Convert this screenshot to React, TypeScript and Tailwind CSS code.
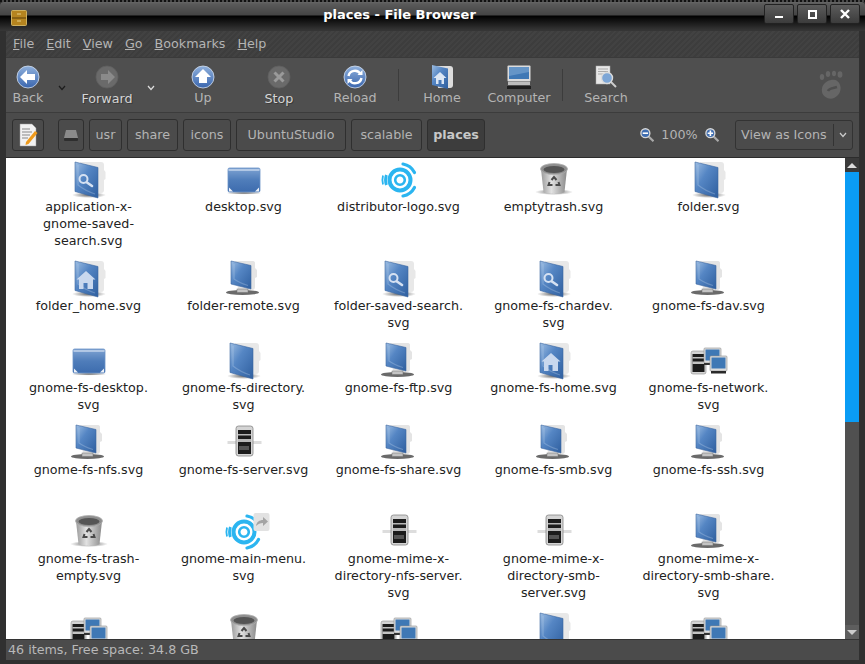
import type { ReactNode } from "react";

function Defs() {
  return (
    <svg width="0" height="0" className="absolute">
      <defs>
        <linearGradient id="blueFolder" x1="0" y1="0" x2="1" y2="1">
          <stop offset="0" stopColor="#9dbde2" />
          <stop offset="0.4" stopColor="#5586c4" />
          <stop offset="1" stopColor="#2f5f9f" />
        </linearGradient>
        <linearGradient id="blueFlat" x1="0" y1="0" x2="0" y2="1">
          <stop offset="0" stopColor="#7fa3d2" />
          <stop offset="0.5" stopColor="#4f7dba" />
          <stop offset="1" stopColor="#3d6cae" />
        </linearGradient>
        <linearGradient id="blueBall" x1="0" y1="0" x2="0" y2="1">
          <stop offset="0" stopColor="#8fb0dc" />
          <stop offset="1" stopColor="#3a66ae" />
        </linearGradient>
        <linearGradient id="can" x1="0" y1="0" x2="1" y2="0">
          <stop offset="0" stopColor="#9a9a9a" />
          <stop offset="0.4" stopColor="#e2e2e2" />
          <stop offset="1" stopColor="#8a8a8a" />
        </linearGradient>
        <radialGradient id="shadow">
          <stop offset="0" stopColor="#444" stopOpacity="0.85" />
          <stop offset="1" stopColor="#444" stopOpacity="0" />
        </radialGradient>
      </defs>
    </svg>
  );
}

type FolderKind = "plain" | "search" | "home" | "remote";

function FolderIcon({ kind = "plain" }: { kind?: FolderKind }) {
  if (kind === "remote") {
    return (
      <svg width="40" height="40" viewBox="0 0 40 40">
        <path d="M11 3h18c1.500 0 2 1 2 2v5l2 2v7l-2 1v9c0 2-1 3-3 3H14z" fill="#e4e4e4" />
        <ellipse cx="18.500" cy="34.500" rx="16.500" ry="2.400" fill="#6a6a6a" />
        <rect x="13" y="31" width="11" height="3.500" fill="#c4c4c4" stroke="#707070" strokeWidth="0.500" />
        <path d="M7 3l20 4.500V31L7 26z" fill="url(#blueFolder)" stroke="#3b659f" strokeWidth="0.600" />
        <path d="M10 6v15c4 3 9 5 14 6.500" fill="none" stroke="#c4d6ee" strokeOpacity="0.3" strokeWidth="1.200" />
      </svg>
    );
  }
  return (
    <svg width="40" height="40" viewBox="0 0 40 40">
      <ellipse cx="20" cy="36" rx="17" ry="3" fill="url(#shadow)" />
      <path d="M11 3h21c2 0 3 1 3 3v5l1.500 2v7l-1.500 1v10c0 2-1 3-3 3H14z" fill="#e8e8e8" />
      <path d="M6 3l23 5.500V39L6 32.500z" fill="url(#blueFolder)" stroke="#39659f" strokeWidth="0.600" />
      <path d="M9 6v20c5 4 11 7 17 9" fill="none" stroke="#c4d6ee" strokeOpacity="0.3" strokeWidth="1.200" />
      {kind === "search" && (
        <g stroke="#d5e1f2" fill="none">
          <circle cx="14.500" cy="20" r="4" strokeWidth="2" />
          <path d="M18 23.500l5 3.500" strokeWidth="2.600" strokeLinecap="round" />
        </g>
      )}
      {kind === "home" && (
        <path d="M17 13l-9.500 8.500h2.500V31h4.500v-6h4v6h5.500v-9.500h2.500z" fill="#c9d8ee" />
      )}
    </svg>
  );
}

function DesktopIcon() {
  return (
    <svg width="40" height="40" viewBox="0 0 40 40">
      <ellipse cx="20" cy="34" rx="18" ry="1.600" fill="url(#shadow)" />
      <rect x="4" y="9" width="32" height="24" rx="1.500" fill="url(#blueFlat)" stroke="#6b92c6" strokeWidth="0.800" />
      <path d="M4.500 11h31" stroke="#d9e4f3" strokeWidth="1.200" />
      <path d="M5 32.500v-4l4 4zM35 32.500v-4l-4 4z" fill="#eef2f8" />
    </svg>
  );
}

function LogoRings({ cx }: { cx: number }) {
  return (
    <g fill="none" stroke="#2bb5f0" transform={`translate(${cx} 21)`}>
      <circle r="4.800" strokeWidth="2.600" />
      <circle r="10.500" strokeWidth="4" />
      <path d="M-13.600 -5a14.500 14.500 0 0 0 0 10" strokeWidth="2.800" />
      <path d="M-17 -4.500a17.500 17.500 0 0 0 0 9" strokeWidth="1.800" />
      <path d="M3 -16a16.300 16.300 0 0 1 11.500 8.500" strokeWidth="3.200" strokeLinecap="round" />
      <path d="M3 16a16.300 16.300 0 0 0 11.500 -8.500" strokeWidth="3.200" strokeLinecap="round" />
    </g>
  );
}

function LogoIcon({ link }: { link?: boolean }) {
  return (
    <svg width="40" height="40" viewBox="0 0 40 40" className="overflow-visible">
      <LogoRings cx={link ? 20 : 21} />
      {link && (
        <g>
          <rect x="29.500" y="2" width="16" height="18" rx="2" fill="#e2e2e2" />
          <path d="M32 15c.5-4 3.500-6 7-6V6l5 4.500-5 4.500v-3c-3 0-5 1-7 3z" fill="#a4a4a4" />
        </g>
      )}
    </svg>
  );
}

function TrashIcon() {
  return (
    <svg width="40" height="40" viewBox="0 0 40 40">
      <ellipse cx="20" cy="33" rx="19" ry="3" fill="url(#shadow)" />
      <path d="M7 10l2.500 23c3 2.500 18 2.500 21 0L33 10z" fill="url(#can)" />
      <ellipse cx="20" cy="10" rx="13.500" ry="5.500" fill="#8e8e8e" stroke="#b0b0b0" strokeWidth="0.800" />
      <ellipse cx="20" cy="10.500" rx="10.500" ry="3.500" fill="#555" />
      <g fill="none" stroke="#4a4a4a" strokeWidth="2">
        <path d="M17.500 21l2.500-3 2.500 3" />
        <path d="M24.500 23l1 3h-4" />
        <path d="M15.500 23l-1 3h4" />
      </g>
    </svg>
  );
}

function ServerIcon() {
  return (
    <svg width="40" height="40" viewBox="0 0 40 40">
      <rect x="3.500" y="19" width="34" height="3" fill="#d4d4d4" opacity="0.800" />
      <rect x="12" y="4" width="17" height="30" rx="2.500" fill="#d4d4d4" stroke="#858585" strokeWidth="0.800" />
      <rect x="14" y="8" width="13" height="24" fill="#1c1c1c" />
      <rect x="14" y="12" width="13" height="1.500" fill="#b8b8b8" />
      <rect x="14" y="17" width="13" height="3" fill="#b8b8b8" />
      <path d="M16 24v4M18 24v4M20 24v4M22 24v4M24 24v4" stroke="#8c8c8c" strokeWidth="1" />
    </svg>
  );
}

function MiniMonitor({ x, y, w, h }: { x: number; y: number; w: number; h: number }) {
  return (
    <g>
      <rect x={x} y={y} width={w} height={h} rx="1" fill="#dcdcdc" stroke="#8d8d8d" strokeWidth="0.600" />
      <rect x={x + 1.5} y={y + 1.5} width={w - 3} height={h - 4} fill="#3f78b5" />
    </g>
  );
}

function NetworkIcon() {
  return (
    <svg width="40" height="40" viewBox="0 0 40 40">
      <rect x="2" y="11" width="15" height="23" rx="2" fill="#d4d4d4" stroke="#8a8a8a" strokeWidth="0.600" />
      <rect x="3.500" y="14" width="12" height="18" fill="#1c1c1c" />
      <rect x="3.500" y="17" width="12" height="1.500" fill="#c4c4c4" />
      <rect x="3.500" y="21.500" width="12" height="2.500" fill="#c4c4c4" />
      <MiniMonitor x={15} y={8} w={17} h={15} />
      <path d="M15 23h6v2h-6z" fill="#333" />
      <MiniMonitor x={21} y={16} w={17} h={15} />
      <rect x="22" y="31" width="15" height="2.500" fill="#2a2a2a" />
    </svg>
  );
}

type Item = { icon: ReactNode; lines: string[] };

const items: Item[] = [
  { icon: <FolderIcon kind="search" />, lines: ["application-x-", "gnome-saved-", "search.svg"] },
  { icon: <DesktopIcon />, lines: ["desktop.svg"] },
  { icon: <LogoIcon />, lines: ["distributor-logo.svg"] },
  { icon: <TrashIcon />, lines: ["emptytrash.svg"] },
  { icon: <FolderIcon />, lines: ["folder.svg"] },
  { icon: <FolderIcon kind="home" />, lines: ["folder_home.svg"] },
  { icon: <FolderIcon kind="remote" />, lines: ["folder-remote.svg"] },
  { icon: <FolderIcon kind="search" />, lines: ["folder-saved-search.", "svg"] },
  { icon: <FolderIcon kind="search" />, lines: ["gnome-fs-chardev.", "svg"] },
  { icon: <FolderIcon kind="remote" />, lines: ["gnome-fs-dav.svg"] },
  { icon: <DesktopIcon />, lines: ["gnome-fs-desktop.", "svg"] },
  { icon: <FolderIcon />, lines: ["gnome-fs-directory.", "svg"] },
  { icon: <FolderIcon kind="remote" />, lines: ["gnome-fs-ftp.svg"] },
  { icon: <FolderIcon kind="home" />, lines: ["gnome-fs-home.svg"] },
  { icon: <NetworkIcon />, lines: ["gnome-fs-network.", "svg"] },
  { icon: <FolderIcon kind="remote" />, lines: ["gnome-fs-nfs.svg"] },
  { icon: <ServerIcon />, lines: ["gnome-fs-server.svg"] },
  { icon: <FolderIcon kind="remote" />, lines: ["gnome-fs-share.svg"] },
  { icon: <FolderIcon kind="remote" />, lines: ["gnome-fs-smb.svg"] },
  { icon: <FolderIcon kind="remote" />, lines: ["gnome-fs-ssh.svg"] },
  { icon: <TrashIcon />, lines: ["gnome-fs-trash-", "empty.svg"] },
  { icon: <LogoIcon link />, lines: ["gnome-main-menu.", "svg"] },
  { icon: <ServerIcon />, lines: ["gnome-mime-x-", "directory-nfs-server.", "svg"] },
  { icon: <ServerIcon />, lines: ["gnome-mime-x-", "directory-smb-", "server.svg"] },
  { icon: <FolderIcon kind="remote" />, lines: ["gnome-mime-x-", "directory-smb-share.", "svg"] },
  { icon: <NetworkIcon />, lines: [] },
  { icon: <TrashIcon />, lines: [] },
  { icon: <NetworkIcon />, lines: [] },
  { icon: <FolderIcon />, lines: [] },
  { icon: <NetworkIcon />, lines: [] },
];

function NavBall({ glyph, dim }: { glyph: "left" | "right" | "up" | "x" | "reload"; dim?: boolean }) {
  return (
    <svg width="24" height="24" viewBox="0 0 24 24">
      <circle cx="12" cy="12" r="11" fill={dim ? "#6a6a6a" : "url(#blueBall)"} stroke={dim ? "#606060" : "#d4e0f0"} strokeWidth="0.800" />
      {glyph === "left" && <path d="M4 12l7-7v4h8v6h-8v4z" fill="#fff" />}
      {glyph === "right" && <path d="M20 12l-7-7v4H6v6h7v4z" fill="#8a8a8a" />}
      {glyph === "up" && <path d="M12 4l8 8h-4v6H8v-6H4z" fill="#fff" />}
      {glyph === "x" && <path d="M7.500 7.500l9 9M16.500 7.500l-9 9" stroke="#9a9a9a" strokeWidth="3" />}
      {glyph === "reload" && (
        <g fill="none" stroke="#fff" strokeWidth="2.400">
          <path d="M5.500 11a6.500 6.500 0 0 1 12-2" />
          <path d="M18.500 13a6.500 6.500 0 0 1-12 2" />
          <path d="M19.500 5v5h-5z" fill="#fff" stroke="none" />
          <path d="M4.500 19v-5h5z" fill="#fff" stroke="none" />
        </g>
      )}
    </svg>
  );
}

function ToolButton({ icon, label, className, bright }: { icon: ReactNode; label: string; className: string; bright?: boolean }) {
  return (
    <div className={`flex flex-col items-center ${className}`}>
      <div className="flex h-[24px] items-center justify-center">{icon}</div>
      <span
        className={`leading-[17px] ${
          bright ? "mt-[1px] text-[#d4d4d4] [text-shadow:1px_1px_0_#3a3a3a]" : "text-[#b4b4b4]"
        }`}
      >
        {label}
      </span>
    </div>
  );
}

function Chevron({ className, light }: { className: string; light?: boolean }) {
  return (
    <div className={`flex justify-center ${className}`}>
      <svg width="8" height="6" viewBox="0 0 8 6" className="mt-[20px]">
        <path d="M1 1l3 3.500L7 1" fill="none" stroke={light ? "#ddd" : "#1d1d1d"} strokeWidth="1.200" />
      </svg>
    </div>
  );
}

function PathButton({ children, active, className }: { children: ReactNode; active?: boolean; className: string }) {
  return (
    <div
      className={`flex h-[32px] items-center justify-center rounded-[3px] border border-[#2f2f2f] ${
        active ? "bg-[#3d3d3d] font-bold text-[#c8c8c8]" : "bg-[#4b4b4b] text-[#b4b4b4]"
      } ${className}`}
    >
      {children}
    </div>
  );
}

function ZoomGlass({ plus }: { plus?: boolean }) {
  return (
    <svg width="16" height="16" viewBox="0 0 16 16">
      <path d="M9 9l6 6" stroke="#aaa" strokeWidth="2.400" />
      <circle cx="6" cy="6" r="5" fill="#3f6db0" stroke="#d8d8d8" strokeWidth="1.500" />
      <path d={plus ? "M3 6h6M6 3v6" : "M3 6h6"} stroke="#fff" strokeWidth="1.800" />
    </svg>
  );
}

function WinButton({ children }: { children: ReactNode }) {
  return (
    <div className="flex h-[20px] w-[30px] items-center justify-center rounded-[2px] border border-[#222] bg-gradient-to-b from-[#5c5c5c] to-[#3c3c3c]">
      {children}
    </div>
  );
}

const menus = [
  ["F", "ile"],
  ["E", "dit"],
  ["V", "iew"],
  ["G", "o"],
  ["B", "ookmarks"],
  ["H", "elp"],
];

export default function App() {
  return (
    <div className="relative flex h-[664px] w-[865px] flex-col overflow-hidden bg-[#303030] font-['DejaVu_Sans',sans-serif] text-[12.7px]">
      <Defs />
      <div className="h-[2px] shrink-0 bg-[repeating-linear-gradient(90deg,#111_0,#111_2px,#4a4a4a_2px,#4a4a4a_4px)]" />
      {/* title bar */}
      <div className="relative h-[29px] shrink-0 rounded-t-[4px] bg-[linear-gradient(#666_0,#5a5a5a_2px,#444_13px,#000_14px,#0c0c0c_17px,#353535_28px)]">
        <svg width="16" height="16" viewBox="0 0 16 16" className="absolute left-[11px] top-[8px]">
          <rect x="0.500" y="0.500" width="15" height="15" rx="1" fill="#b5841f" stroke="#cdb060" />
          <path d="M1 8h14" stroke="#5c3f08" />
          <path d="M6 4h4M6 11h4" stroke="#e6cf8a" />
        </svg>
        <div className="pt-[4px] pr-[66px] text-center text-[13px] font-bold leading-[18px] text-white">places - File Browser</div>
        <div className="absolute right-[5px] top-[2px] flex gap-[3px]">
          <WinButton><div className="mt-[6px] h-[2px] w-[8px] bg-white" /></WinButton>
          <WinButton><div className="h-[9px] w-[9px] border-2 border-white" /></WinButton>
          <WinButton>
            <svg width="10" height="10" viewBox="0 0 10 10"><path d="M1 1l8 8M9 1l-8 8" stroke="#fff" strokeWidth="2.400" /></svg>
          </WinButton>
        </div>
      </div>

      <div className="mx-[6px] flex min-h-0 flex-1 flex-col bg-[#4b4b4b]">
        {/* menu bar */}
        <div className="flex h-[27px] shrink-0 items-center gap-[12px] border-b border-[#3a3a3a] bg-[repeating-linear-gradient(135deg,#3d3d3d_0,#3d3d3d_2px,#424242_2px,#424242_4px)] pl-[7px] text-[#b4b4b4]">
          {menus.map(([first, rest]) => (
            <span key={first}>
              <span className="underline">{first}</span>
              {rest}
            </span>
          ))}
        </div>

        {/* main toolbar */}
        <div className="flex h-[55px] shrink-0 items-start border-b border-[#3c3c3c] bg-[#4f4f4f] pt-[7px]">
          <ToolButton icon={<NavBall glyph="left" />} label="Back" className="w-[44px]" />
          <Chevron className="w-[24px]" />
          <ToolButton icon={<NavBall glyph="right" dim />} label="Forward" className="w-[66px]" bright />
          <Chevron className="w-[22px]" light />
          <ToolButton icon={<NavBall glyph="up" />} label="Up" className="w-[82px]" />
          <ToolButton icon={<NavBall glyph="x" dim />} label="Stop" className="w-[70px]" bright />
          <ToolButton icon={<NavBall glyph="reload" />} label="Reload" className="w-[82px]" />
          <div className="ml-[2px] mt-[4px] h-[32px] w-[1px] bg-[#3c3c3c]" />
          <ToolButton
            icon={
              <svg width="24" height="24" viewBox="0 0 24 24">
                <path d="M6 1h14c2 0 3 1 3 3v16c0 2-1 3-3 3H8z" fill="#ddd" />
                <path d="M2 0l16 3.500V24L2 20z" fill="url(#blueFolder)" />
                <path d="M10 7L3.500 13H6v6h2.500v-4h3v4H14v-6h2.500z" fill="#dbe6f4" />
              </svg>
            }
            label="Home"
            className="w-[86px]"
          />
          <ToolButton
            icon={
              <svg width="24" height="24" viewBox="0 0 24 24">
                <rect x="0.500" y="0.500" width="23" height="16" rx="1" fill="#dcdcdc" />
                <rect x="2" y="2" width="20" height="12" fill="#3f78b5" />
                <path d="M2 2h20v5L2 11z" fill="#7fa8d4" opacity="0.600" />
                <rect x="1" y="17" width="22" height="3" fill="#bdbdbd" />
                <rect x="0" y="21" width="24" height="3" fill="#1e1e1e" />
              </svg>
            }
            label="Computer"
            className="w-[68px]"
          />
          <div className="ml-[9px] mt-[4px] h-[32px] w-[1px] bg-[#3c3c3c]" />
          <ToolButton
            icon={
              <svg width="22" height="24" viewBox="0 0 22 24">
                <rect x="1" y="1" width="14" height="18" fill="#e8e8e8" stroke="#aaa" strokeWidth="0.500" />
                <path d="M3 4h10M3 6.500h10M3 9h6" stroke="#9a9a9a" strokeWidth="0.800" />
                <path d="M16 17l5 5" stroke="#ccc" strokeWidth="2" />
                <circle cx="12" cy="13" r="5.500" fill="#7da6d6" stroke="#dcdcdc" strokeWidth="1.400" />
              </svg>
            }
            label="Search"
            className="w-[86px]"
          />
          <div className="ml-auto mr-[14px] mt-[5px]">
            <svg width="26" height="30" viewBox="0 0 26 30">
              <path d="M12 10c-6 1-10 6-9 12 1 5 7 8 12 6 5-2 8-8 6-13-1-4-5-6-9-5z" fill="#666" />
              <path d="M9 21c1-3 6-3 9-4" fill="none" stroke="#4f4f4f" strokeWidth="2.500" />
              <ellipse cx="3" cy="7" rx="2.200" ry="3" fill="#666" />
              <ellipse cx="9" cy="4" rx="2.200" ry="3" fill="#666" />
              <ellipse cx="15" cy="3.500" rx="2" ry="2.800" fill="#666" />
              <ellipse cx="21" cy="4.500" rx="2.400" ry="3.200" fill="#666" />
            </svg>
          </div>
        </div>

        {/* path bar */}
        <div className="flex h-[44px] shrink-0 items-center bg-[#4b4b4b] pl-[6px]">
          <PathButton className="mr-[14px] w-[32px]">
            <svg width="20" height="24" viewBox="0 0 20 24">
              <path d="M2 1h12l4 4v18H2z" fill="#f2f2f2" stroke="#999" strokeWidth="0.500" />
              <path d="M4 6h8M4 9h10M4 12h8M4 15h6" stroke="#888" strokeWidth="1" />
              <path d="M8 19l9-11 2.500 2-9 11-3 1z" fill="#ee9a1c" />
            </svg>
          </PathButton>
          <PathButton className="mr-[5px] w-[26px]">
            <svg width="16" height="13" viewBox="0 0 16 13">
              <path d="M3 1h10l2 8H1z" fill="#8b8b8b" />
              <rect x="1" y="9" width="14" height="3" rx="1" fill="#2e2e2e" />
            </svg>
          </PathButton>
          <PathButton className="mr-[5px] w-[33px]">usr</PathButton>
          <PathButton className="mr-[5px] w-[51px]">share</PathButton>
          <PathButton className="mr-[5px] w-[48px]">icons</PathButton>
          <PathButton className="mr-[5px] w-[110px]">UbuntuStudio</PathButton>
          <PathButton className="mr-[5px] w-[71px]">scalable</PathButton>
          <PathButton active className="w-[58px]">places</PathButton>
          <div className="ml-[155px] flex w-[79px] items-center text-[#b4b4b4]">
            <ZoomGlass />
            <span className="ml-[7px] mr-[7px]">100%</span>
            <ZoomGlass plus />
          </div>
          <div className="ml-[16px] flex h-[30px] w-[118px] items-center rounded-[3px] border border-[#333] pl-[5px] text-[#b4b4b4]">
            <span className="w-[92px] whitespace-nowrap">View as Icons</span>
            <div className="flex h-[22px] flex-1 items-center justify-center border-l border-[#333]">
              <svg width="8" height="6" viewBox="0 0 8 6"><path d="M1 1l3 3.500L7 1" fill="none" stroke="#ccc" strokeWidth="1.200" /></svg>
            </div>
          </div>
        </div>

        {/* file area */}
        <div className="flex min-h-0 flex-1 overflow-hidden border-t border-[#2c2c2c]">
          <div className="min-w-0 flex-1 overflow-hidden bg-white pl-[5px] pt-[1px]">
            <div className="grid grid-cols-[repeat(5,155px)] grid-rows-[99px_82px_82px_89px_99px_40px]">
              {items.map((item, i) => (
                <div key={i} className="flex flex-col items-center">
                  {item.icon}
                  <div className="-mt-[1px] text-center leading-[17px] text-[#222]">
                    {item.lines.map((line) => (
                      <div key={line} className="whitespace-nowrap">{line}</div>
                    ))}
                  </div>
                </div>
              ))}
            </div>
          </div>
          {/* scrollbar */}
          <div className="flex w-[14px] shrink-0 flex-col bg-[#505050]">
            <div className="flex h-[14px] items-center justify-center bg-[#3a3a3a]">
              <div className="h-0 w-0 border-x-[5px] border-b-[5px] border-x-transparent border-b-[#ddd]" />
            </div>
            <div className="h-[250px] bg-[#0a9cf5]" />
            <div className="flex-1" />
            <div className="flex h-[14px] items-center justify-center bg-[#5e5e5e]">
              <div className="h-0 w-0 border-x-[5px] border-t-[5px] border-x-transparent border-t-[#ccc]" />
            </div>
          </div>
        </div>

        {/* status bar */}
        <div className="flex h-[21px] shrink-0 items-center border-t border-[#333] bg-[#4b4b4b] pl-[2px] text-[#b8b8b8]">
          46 items, Free space: 34.8 GB
        </div>
      </div>
      <div className="h-[4px] shrink-0 bg-[#303030]" />
    </div>
  );
}
